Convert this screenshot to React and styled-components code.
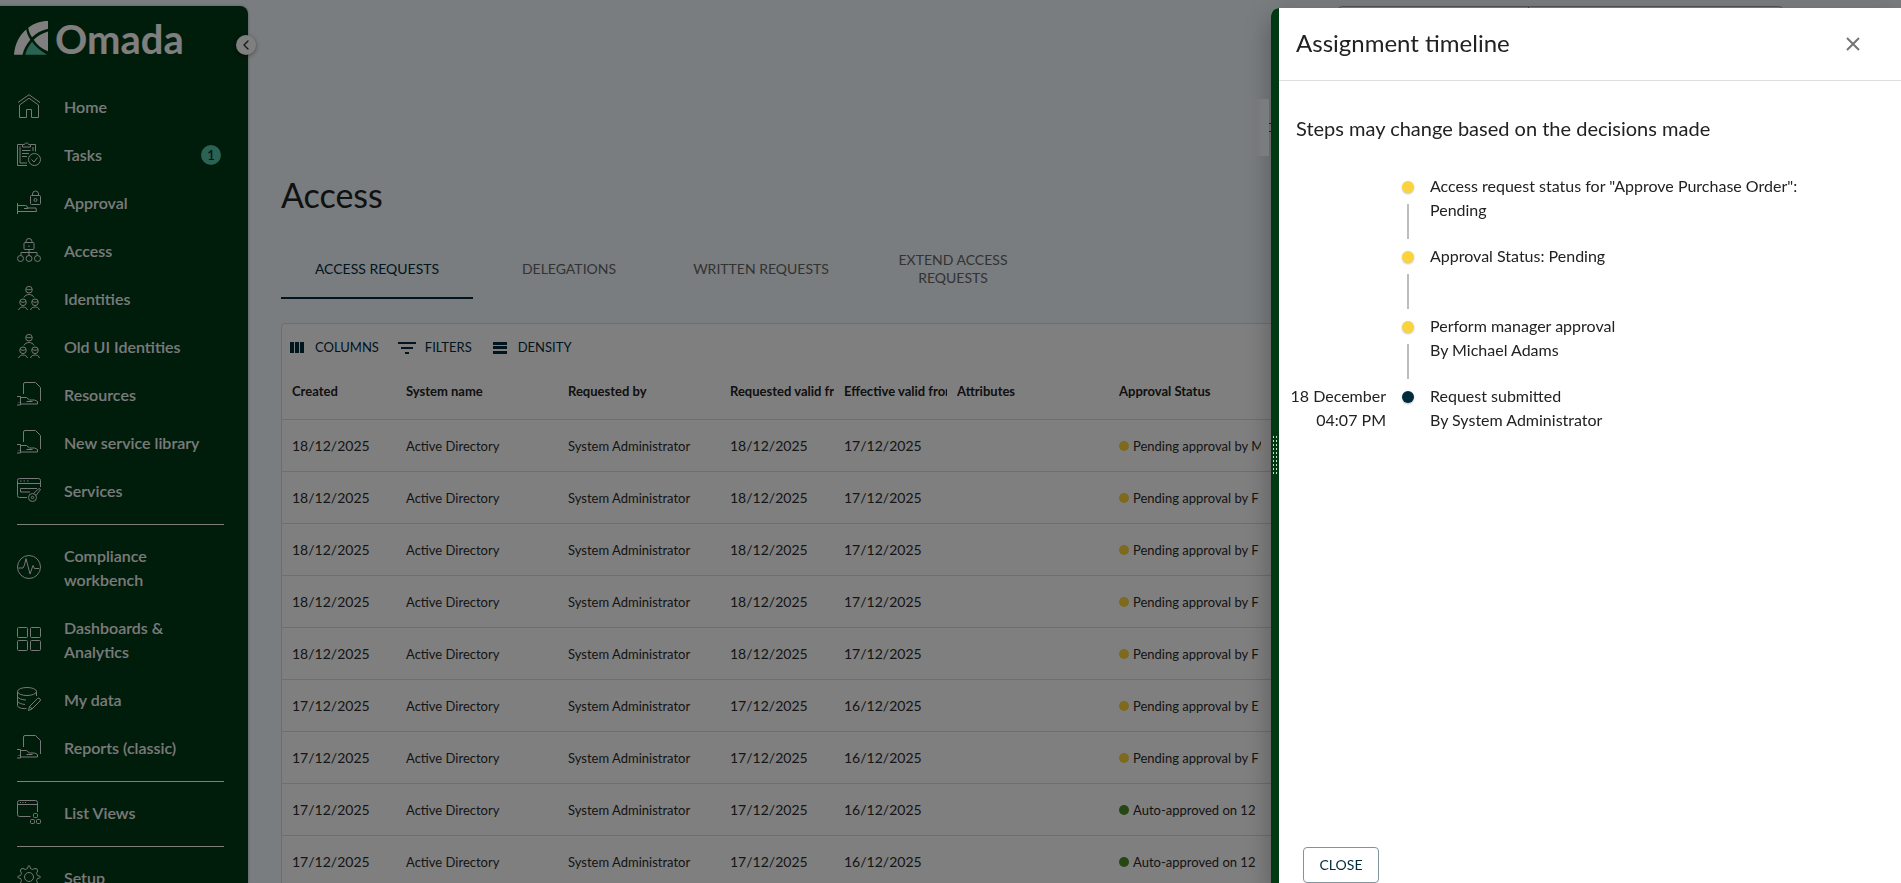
import React from 'react';
import styled, { createGlobalStyle } from 'styled-components';
import { ChevronLeft } from 'lucide-react';

const GlobalStyle = createGlobalStyle`
  * {
    box-sizing: border-box;
  }

  body {
    margin: 0;
    font-family: Lato, 'Liberation Sans', sans-serif;
    font-size: 16px;
    color: #222;
    background: #f3fafe;
  }

  button {
    font-family: inherit;
    border: none;
    background: none;
    padding: 0;
    cursor: pointer;
  }
`;

const icons = {
  home: (
    <>
      <path d="M1 8.5 12 .7l11 7.8" />
      <path d="M2.5 11v12.5h7v-8h5v8h7V11L12 4.2z" />
    </>
  ),
  tasks: (
    <>
      <path d="M5 2.5H.5v21H10M14 2.5h4.5v7M3 4.5v16.5h7M16 5v4" />
      <path d="M5.5 5V2.5h2C7.5.5 11.5.5 11.5 2.5h2V5z" />
      <path d="M5 8.5h8.5M5 11.5h7M5 14.5h5" />
      <circle cx="17.5" cy="17.5" r="6" />
      <path d="m14.5 17.5 2.5 2.5 3.5-4.5" />
    </>
  ),
  approval: (
    <>
      <rect x="13.5" y="5.5" width="10" height="9" rx="1" />
      <path d="M15.5 5.5V4a3 3 0 0 1 6 0v1.5" />
      <circle cx="18.5" cy="10" r="1.5" />
      <path d="M.5 13v11M.5 15.5h8q2 0 2 2.5H19l.5 3.5H.5M7 18.5h4" />
    </>
  ),
  access: (
    <>
      <rect x="7" y="4.5" width="10" height="7" rx="1" />
      <path d="M9 4.5V3.500a3 3 0 0 1 6 0v1M12 7.5v1.500M12 11.5v6M4 17.5v-3h16v3" />
      <circle cx="3.5" cy="20.5" r="3" />
      <circle cx="12" cy="20.5" r="3" />
      <circle cx="20.5" cy="20.5" r="3" />
    </>
  ),
  people: (
    <>
      <circle cx="12" cy="3.7" r="3.3" />
      <circle cx="6" cy="16.3" r="3.3" />
      <circle cx="18" cy="16.3" r="3.3" />
      <path d="M9 3c2 1 4 1 6 0M3 15.5c2 1 4 1 6 0M15 15.5c2 1 4 1 6 0" />
      <path d="M7 11.5c1.5-4 8.5-4 10 0M1.5 24c1-4 8-4 9 0M13.5 24c1-4 8-4 9 0" />
    </>
  ),
  resource: (
    <>
      <path d="M6.5 12V2Q6.5.5 8 .5h10.5l5 5V19" />
      <path d="M0 14.5h3.5v8.5H0M3.5 15.5h6l3 2.5h5l3 1.5v2.5H3.5M9.5 19.5h6M1.5 20.5h1" />
    </>
  ),
  services: (
    <>
      <path d="M10 19.5H2.5q-2 0-2-2v-15q0-2 2-2h19q2 0 2 2V9M.5 5.5h23" />
      <path d="M3 3h1.5M6.5 3H8M10 3h1.5M20 10.5H3.5V14H13" />
      <circle cx="15.5" cy="19.5" r="4" />
      <circle cx="15.5" cy="19.5" r="1.2" />
      <path d="m16.5 15.5 5.5-5 1.5 1-4.5 6" />
    </>
  ),
  pulse: (
    <>
      <circle cx="12" cy="12" r="11.5" />
      <path d="M1.5 13H6l1.5-3L9 3.5 13 19l3-8.5 1.5 3H22" />
    </>
  ),
  grid: (
    <>
      <rect x=".5" y=".5" width="10" height="10" rx="1" />
      <rect x="13.5" y=".5" width="10" height="10" rx="1" />
      <rect x=".5" y="13.5" width="10" height="10" rx="1" />
      <rect x="13.5" y="13.5" width="10" height="10" rx="1" />
    </>
  ),
  data: (
    <>
      <ellipse cx="10" cy="4.5" rx="9.5" ry="4" />
      <path d="M19.5 4.5V9M.5 4.5v14c0 2 4 3.5 9 3M.5 9.5c1 2.5 4 3 8.5 3.5M.5 14c1 2.5 4 3 7.5 3.5" />
      <path d="m11.5 23.5 1-4 8-8q1.5-1 2.5.3 1 1.2 0 2.2l-8 8zM13 19.5l2 2.5" />
    </>
  ),
  list: (
    <>
      <path d="M13.5 16.5h-11q-2 0-2-2v-12q0-2 2-2h16q2 0 2 2V12M.5 4.5h20" />
      <path d="M3 2.5h1M5.5 2.5h1M8 2.5h1" />
      <rect x="16.5" y="13.5" width="4" height="4" rx="1" />
      <rect x="13.5" y="19.5" width="4" height="4" rx="1" />
      <rect x="19.5" y="19.5" width="4" height="4" rx="1" />
    </>
  ),
  gear: (
    <>
      <circle cx="12" cy="12" r="4.5" />
      <path d="M12 .5q1 0 1.5 3 1 .5 2.200 1 2.500-2 4.300-.5 1.500 1.800-.5 4.300.500 1.200 1 2.200 3 .500 3 1.500t-3 1.500q-.500 1-1 2.200 2 2.500.500 4.300-1.800 1.500-4.300-.500-1.200.500-2.200 1-.500 3-1.500 3t-1.500-3q-1-.500-2.200-1-2.500 2-4.300.500-1.500-1.800.500-4.300-.500-1.200-1-2.200-3-.500-3-1.500t3-1.500q.500-1 1-2.200-2-2.500-.500-4.300 1.800-1.500 4.300.500 1.200-.500 2.200-1 .500-3 1.500-3z" />
    </>
  ),
};

const menu = [
  [
    { icon: 'home', label: 'Home' },
    { icon: 'tasks', label: 'Tasks', count: 1 },
    { icon: 'approval', label: 'Approval' },
    { icon: 'access', label: 'Access' },
    { icon: 'people', label: 'Identities' },
    { icon: 'people', label: 'Old UI Identities' },
    { icon: 'resource', label: 'Resources' },
    { icon: 'resource', label: 'New service library' },
    { icon: 'services', label: 'Services' },
  ],
  [
    { icon: 'pulse', label: 'Compliance workbench' },
    { icon: 'grid', label: 'Dashboards & Analytics' },
    { icon: 'data', label: 'My data' },
    { icon: 'resource', label: 'Reports (classic)' },
  ],
  [{ icon: 'list', label: 'List Views' }],
  [{ icon: 'gear', label: 'Setup' }],
];

const tabs = ['ACCESS REQUESTS', 'DELEGATIONS', 'WRITTEN REQUESTS', 'EXTEND ACCESS REQUESTS'];

const columns = [
  { title: 'Created', width: 114 },
  { title: 'System name', width: 162 },
  { title: 'Requested by', width: 162 },
  { title: 'Requested valid from', width: 114 },
  { title: 'Effective valid from', width: 113 },
  { title: 'Attributes', width: 162 },
  { title: 'Approval Status', width: 162 },
];

const rows = [
  { id: 1, created: '18/12/2025', effective: '17/12/2025', status: 'Pending approval by M' },
  { id: 2, created: '18/12/2025', effective: '17/12/2025', status: 'Pending approval by F' },
  { id: 3, created: '18/12/2025', effective: '17/12/2025', status: 'Pending approval by F' },
  { id: 4, created: '18/12/2025', effective: '17/12/2025', status: 'Pending approval by F' },
  { id: 5, created: '18/12/2025', effective: '17/12/2025', status: 'Pending approval by F' },
  { id: 6, created: '17/12/2025', effective: '16/12/2025', status: 'Pending approval by E' },
  { id: 7, created: '17/12/2025', effective: '16/12/2025', status: 'Pending approval by F' },
  { id: 8, created: '17/12/2025', effective: '16/12/2025', status: 'Auto-approved on 12', done: true },
  { id: 9, created: '17/12/2025', effective: '16/12/2025', status: 'Auto-approved on 12', done: true },
];

const steps = [
  { id: 1, lines: ['Access request status for "Approve Purchase Order": Pending'] },
  { id: 2, lines: ['Approval Status: Pending'] },
  { id: 3, lines: ['Perform manager approval', 'By Michael Adams'] },
  { id: 4, lines: ['Request submitted', 'By System Administrator'], time: ['18 December', '04:07 PM'], done: true },
];

const Page = styled.div`
  display: flex;
  height: 100vh;
  overflow: hidden;
`;

const Sidebar = styled.aside`
  position: relative;
  flex: 0 0 248px;
  margin-top: 6px;
  border-radius: 0 8px 0 0;
  background: #003814;
  box-shadow: 0 0 3px rgba(0, 0, 0, 0.3);
`;

const Brand = styled.div`
  display: flex;
  gap: 7px;
  height: 76px;
  padding: 15px 0 0 14px;
`;

const BrandName = styled.span`
  font-size: 40px;
  font-weight: 700;
  line-height: 36px;
  color: #fff;
`;

const Toggle = styled.button`
  position: absolute;
  top: 29px;
  right: -8px;
  display: flex;
  align-items: center;
  justify-content: center;
  width: 20px;
  height: 20px;
  border-radius: 50%;
  color: #333;
  background: #fff;
  box-shadow: 0 1px 4px rgba(0, 0, 0, 0.4);
`;

const MenuGroup = styled.nav`
  & + & {
    padding-top: 10px;
  }

  & + &::before {
    content: '';
    display: block;
    height: 1px;
    margin: 0 24px 6px 17px;
    background: #fffff4;
  }
`;

const MenuItem = styled.a`
  display: flex;
  align-items: center;
  gap: 23px;
  padding: 11px 27px 11px 17px;
  color: #f4f4f4;
  font-weight: 600;
  line-height: 24px;
  text-decoration: none;
`;

const MenuLabel = styled.span`
  flex: 0 1 140px;
  padding-top: 2px;
`;

const MenuIcon = styled.svg`
  flex: none;
  width: 24px;
  height: 24px;
  fill: none;
  stroke: #f0f0f0;
  stroke-width: 1;
  overflow: visible;
`;

const Count = styled.span`
  flex: none;
  width: 20px;
  height: 20px;
  margin: 2px 0 0 -26px;
  border-radius: 50%;
  background: #54c6a6;
  color: #002b3c;
  font-size: 13px;
  line-height: 20px;
  text-align: center;
`;

const Main = styled.main`
  flex: 1;
  min-width: 0;
  padding: 6px 0 0 33px;
`;

const TopSearch = styled.div`
  display: flex;
  width: 445px;
  height: 40px;
  margin: 0 118px 129px auto;
  border: 1px solid #a5a9ac;
  border-radius: 4px;
`;

const SearchScope = styled.div`
  flex: 0 0 190px;
  border-right: 1px solid #7c8083;
`;

const Title = styled.h1`
  margin: 0 0 24px;
  font-size: 34px;
  font-weight: 400;
  line-height: 40px;
`;

const Tabs = styled.div`
  display: flex;
  margin-bottom: 24px;
`;

const Tab = styled.button`
  width: 192px;
  height: 60px;
  padding: 2px 24px 0;
  border-bottom: 2px solid ${(props) => (props.$active ? '#002b3c' : 'transparent')};
  color: ${(props) => (props.$active ? '#002b3c' : '#666')};
  font-size: 14px;
  line-height: 18px;
`;

const Card = styled.section`
  border: 1px solid #dcdcdc;
  border-radius: 4px 0 0 0;
  background: #fff;
`;

const Toolbar = styled.div`
  display: flex;
  gap: 18px;
  height: 40px;
  padding: 6px 0 0 5px;
`;

const ToolButton = styled.button`
  display: flex;
  align-items: center;
  gap: 8px;
  color: #002b3c;
  font-size: 13px;

  svg {
    fill: #002b3c;
  }
`;

const Table = styled.table`
  width: 100%;
  table-layout: fixed;
  border-collapse: separate;
  border-spacing: 0;
  font-size: 13px;
`;

const HeadCell = styled.th`
  height: 56px;
  padding: 0 0 2px 10px;
  border-bottom: 1px solid #dcdcdc;
  font-weight: 700;
  text-align: left;
  white-space: nowrap;
  overflow: hidden;
`;

const Cell = styled.td`
  height: 52px;
  padding: 0 10px;
  border-bottom: 1px solid #dcdcdc;
  font-size: ${(props) => (props.$date ? 14 : 13)}px;
  color: #2b2b2b;
  white-space: nowrap;
`;

const Status = styled.div`
  display: flex;
  align-items: center;
  gap: 4px;
  overflow: hidden;
`;

const StatusDot = styled.span`
  flex: none;
  width: 10px;
  height: 10px;
  border-radius: 50%;
  background: ${(props) => (props.$done ? '#4c8c2c' : '#fcd43c')};
`;

const Backdrop = styled.div`
  position: fixed;
  inset: 0;
  background: rgba(0, 0, 0, 0.5);
`;

const Drawer = styled.aside`
  position: fixed;
  top: 8px;
  right: 0;
  bottom: 0;
  display: flex;
  width: 630px;
  border-radius: 8px 0 0 0;
  background: #fff;
  box-shadow: 0 8px 10px -5px rgba(0, 0, 0, 0.2), 0 16px 24px 2px rgba(0, 0, 0, 0.14),
    0 6px 30px 5px rgba(0, 0, 0, 0.12);
`;

const Handle = styled.div`
  display: flex;
  align-items: center;
  justify-content: center;
  flex: 0 0 8px;
  padding-top: 19px;
  border-radius: 8px 0 0 0;
  background: #003912;
`;

const Grip = styled.span`
  width: 4px;
  height: 38px;
  background: repeating-linear-gradient(transparent 0 2px, #003912 2px 4px),
    linear-gradient(90deg, #cfdcd2 1px, transparent 1px 3px, #cfdcd2 3px);
`;

const Peek = styled.div`
  position: absolute;
  top: 91px;
  left: -18px;
  width: 18px;
  height: 57px;
  border-right: 2px solid #6b686a;
  background: linear-gradient(90deg, transparent, #7a7d80 10px);

  &::after {
    content: '';
    position: absolute;
    top: 24px;
    right: -2px;
    width: 2px;
    height: 7px;
    border: solid #222;
    border-width: 1px 0;
  }
`;

const Panel = styled.div`
  display: flex;
  flex-direction: column;
  flex: 1;
`;

const PanelHeader = styled.header`
  display: flex;
  align-items: center;
  justify-content: space-between;
  height: 73px;
  padding: 0 36px 0 17px;
  border-bottom: 1px solid #dedede;
`;

const PanelTitle = styled.h2`
  margin: 0;
  padding-bottom: 2px;
  font-size: 24px;
  font-weight: 400;
  line-height: 32px;
`;

const CloseIcon = styled.button`
  display: flex;
  color: #757575;

  svg {
    stroke: currentColor;
    stroke-width: 2;
  }
`;

const PanelBody = styled.div`
  flex: 1;
  padding: 32px 80px 0 0;
`;

const Note = styled.h3`
  margin: 0 0 31px;
  padding-left: 17px;
  font-size: 20px;
  font-weight: 400;
  line-height: 30px;
  white-space: nowrap;
`;

const Timeline = styled.ol`
  margin: 0;
  padding: 0;
  list-style: none;
`;

const Step = styled.li`
  display: grid;
  grid-template-columns: 107px 44px 1fr;
  min-height: 70px;
  line-height: 24px;
`;

const StepTime = styled.div`
  text-align: right;
`;

const StepMarker = styled.div`
  display: flex;
  flex-direction: column;
  align-items: center;
  gap: 11px;
  padding: 7px 0 5px;
`;

const StepDot = styled.span`
  width: 12px;
  height: 12px;
  border-radius: 50%;
  background: ${(props) => (props.$done ? '#002b3c' : '#fbd43c')};
  box-shadow: 0 1px 2px rgba(0, 0, 0, 0.25);
`;

const StepLine = styled.span`
  flex: 1;
  width: 2px;
  background: #bdbdbd;
`;

const PanelFooter = styled.footer`
  padding-left: 24px;
`;

const CloseButton = styled.button`
  width: 76px;
  height: 36px;
  padding-bottom: 2px;
  border: 1px solid #7f959d;
  border-radius: 4px;
  color: #002b3c;
  font-size: 14px;
`;

const Logo = () => (
  <svg width="34" height="34" viewBox="0 0 100 100" fill="#fff">
    <path d="M0 99C3 66 16 42 36 25c2 11 6 21 12 30-11 13-19 27-23 44z" />
    <path d="M42 20C58 7 78 0 100 0v23c-20 5-35 13-47 25-6-8-10-18-11-28z" />
    <path d="M58 55c12-12 26-19 42-24v58c-18-7-32-18-42-34z" />
    <path fill="#54c6a6" d="M33 99c4-15 11-27 20-38 11 15 25 27 44 38z" />
  </svg>
);

const App = () => {
  return (
    <>
      <GlobalStyle />
      <Page>
        <Sidebar>
          <Brand>
            <Logo />
            <BrandName>Omada</BrandName>
          </Brand>
          <Toggle aria-label="Collapse menu">
            <ChevronLeft size={16} />
          </Toggle>
          {menu.map((group, index) => (
            <MenuGroup key={index}>
              {group.map((item) => (
                <MenuItem key={item.label} href="#">
                  <MenuIcon viewBox="0 0 24 24">{icons[item.icon]}</MenuIcon>
                  <MenuLabel>{item.label}</MenuLabel>
                  {item.count && <Count>{item.count}</Count>}
                </MenuItem>
              ))}
            </MenuGroup>
          ))}
        </Sidebar>

        <Main>
          <TopSearch>
            <SearchScope />
          </TopSearch>
          <Title>Access</Title>
          <Tabs role="tablist">
            {tabs.map((tab, index) => (
              <Tab key={tab} role="tab" aria-selected={index === 0} $active={index === 0}>
                {tab}
              </Tab>
            ))}
          </Tabs>
          <Card>
            <Toolbar>
              <ToolButton>
                <svg width="20" height="20">
                  <path d="M3 5h4v11H3zM8 5h4v11H8zM13 5h4v11h-4z" />
                </svg>
                COLUMNS
              </ToolButton>
              <ToolButton>
                <svg width="20" height="20">
                  <path d="M1 5h18v2H1zM4 10h12v2H4zM8 15h4v2H8z" />
                </svg>
                FILTERS
              </ToolButton>
              <ToolButton>
                <svg width="20" height="20">
                  <path d="M3 5h14v3H3zM3 9h14v3H3zM3 14h14v3H3z" />
                </svg>
                DENSITY
              </ToolButton>
            </Toolbar>
            <Table>
              <colgroup>
                {columns.map((column) => (
                  <col key={column.title} width={column.width} />
                ))}
                <col />
              </colgroup>
              <thead>
                <tr>
                  {columns.map((column) => (
                    <HeadCell key={column.title}>{column.title}</HeadCell>
                  ))}
                  <HeadCell />
                </tr>
              </thead>
              <tbody>
                {rows.map((row) => (
                  <tr key={row.id}>
                    <Cell $date>{row.created}</Cell>
                    <Cell>Active Directory</Cell>
                    <Cell>System Administrator</Cell>
                    <Cell $date>{row.created}</Cell>
                    <Cell $date>{row.effective}</Cell>
                    <Cell />
                    <Cell>
                      <Status>
                        <StatusDot $done={row.done} />
                        {row.status}
                      </Status>
                    </Cell>
                    <Cell />
                  </tr>
                ))}
              </tbody>
            </Table>
          </Card>
        </Main>
      </Page>

      <Backdrop />

      <Drawer>
        <Peek />
        <Handle>
          <Grip />
        </Handle>
        <Panel>
          <PanelHeader>
            <PanelTitle>Assignment timeline</PanelTitle>
            <CloseIcon aria-label="Close">
              <svg width="24" height="24">
                <path d="m6 6 12 12M18 6 6 18" />
              </svg>
            </CloseIcon>
          </PanelHeader>
          <PanelBody>
            <Note>Steps may change based on the decisions made</Note>
            <Timeline>
              {steps.map((step, index) => (
                <Step key={step.id}>
                  <StepTime>
                    {step.time && step.time.map((line) => <div key={line}>{line}</div>)}
                  </StepTime>
                  <StepMarker>
                    <StepDot $done={step.done} />
                    {index < steps.length - 1 && <StepLine />}
                  </StepMarker>
                  <div>
                    {step.lines.map((line) => (
                      <div key={line}>{line}</div>
                    ))}
                  </div>
                </Step>
              ))}
            </Timeline>
          </PanelBody>
          <PanelFooter>
            <CloseButton>CLOSE</CloseButton>
          </PanelFooter>
        </Panel>
      </Drawer>
    </>
  );
};

export default App;
